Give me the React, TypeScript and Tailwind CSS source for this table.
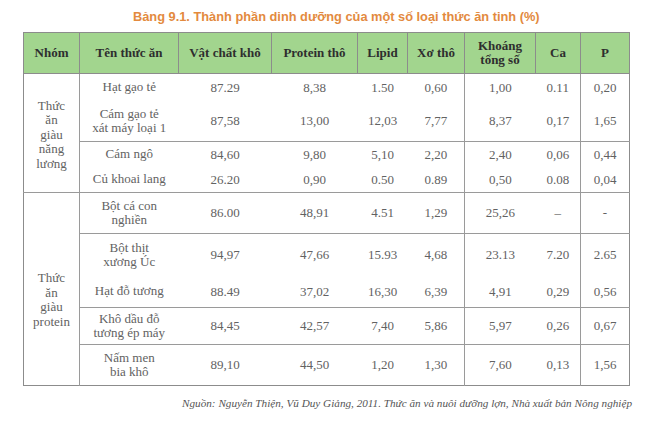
import React from "react";

type Row = {
  name: string[];
  vals: string[];
  h: string;
  top?: boolean;
};

const energyRows: Row[] = [
  { name: ["Hạt gạo tẻ"], vals: ["87.29", "8,38", "1.50", "0,60", "1,00", "0.11", "0,20"], h: "h-[27px]" },
  { name: ["Cám gạo tẻ", "xát máy loại 1"], vals: ["87,58", "13,00", "12,03", "7,77", "8,37", "0,17", "1,65"], h: "h-[41px]" },
  { name: ["Cám ngô"], vals: ["84,60", "9,80", "5,10", "2,20", "2,40", "0,06", "0,44"], h: "h-[25px]", top: true },
  { name: ["Củ khoai lang"], vals: ["26.20", "0,90", "0.50", "0.89", "0,50", "0.08", "0,04"], h: "h-[26px]" },
];

const proteinRows: Row[] = [
  { name: ["Bột cá con", "nghiền"], vals: ["86.00", "48,91", "4.51", "1,29", "25,26", "–", "-"], h: "h-[41px]", top: true },
  { name: ["Bột thịt", "xương Úc"], vals: ["94,97", "47,66", "15.93", "4,68", "23.13", "7.20", "2.65"], h: "h-[42px]", top: true },
  { name: ["Hạt đỗ tương"], vals: ["88.49", "37,02", "16,30", "6,39", "4,91", "0,29", "0,56"], h: "h-[32px]" },
  { name: ["Khô dầu đỗ", "tương ép máy"], vals: ["84,45", "42,57", "7,40", "5,86", "5,97", "0,26", "0,67"], h: "h-[37px]", top: true },
  { name: ["Nấm men", "bia khô"], vals: ["89,10", "44,50", "1,20", "1,30", "7,60", "0,13", "1,56"], h: "h-[41px]", top: true },
];

const headers = [
  ["Nhóm"],
  ["Tên thức ăn"],
  ["Vật chất khô"],
  ["Protein thô"],
  ["Lipid"],
  ["Xơ thô"],
  ["Khoáng", "tổng số"],
  ["Ca"],
  ["P"],
];

// columns that keep a vertical rule in the body (Khoáng, P)
const ruled = [4, 6];

function GroupRows({ rows, group, pad }: { rows: Row[]; group: string[]; pad: string }) {
  return (
    <>
      {rows.map((r, i) => (
        <tr key={i} className={`${r.h} ${r.top || i === 0 ? "border-t border-[#9a9a9a]" : ""}`}>
          {i === 0 && (
            <td rowSpan={rows.length} className="border-r border-[#9a9a9a] align-middle text-center">
              <div className={`leading-[14.5px] ${pad}`}>
                {group.map((w) => (
                  <div key={w}>{w}</div>
                ))}
              </div>
            </td>
          )}
          <td className="text-center leading-[14px] align-middle">
            {r.name.map((n) => (
              <div key={n}>{n}</div>
            ))}
          </td>
          {r.vals.map((v, j) => (
            <td
              key={j}
              className={`text-center align-middle ${ruled.includes(j) ? "border-l border-[#9a9a9a]" : ""}`}
            >
              {v}
            </td>
          ))}
        </tr>
      ))}
    </>
  );
}

export default function App() {
  return (
    <div className="w-[652px] h-[430px] bg-white overflow-hidden [font-family:Liberation_Serif,serif]">
      <div className="h-[32px] pt-[7px] pl-[133px] text-[12.8px] font-bold text-[#e38a3e] [font-family:Liberation_Sans,sans-serif]">
        Bảng 9.1. Thành phần dinh dưỡng của một số loại thức ăn tinh (%)
      </div>

      <div className="pl-[23px]">
        <table className="table-fixed border-collapse w-[606px] border border-[#8c8c8c] text-[13px] text-[#626262] [font-family:Liberation_Serif,serif]">
          <colgroup>
            <col className="w-[56px]" />
            <col className="w-[99px]" />
            <col className="w-[93px]" />
            <col className="w-[86px]" />
            <col className="w-[50px]" />
            <col className="w-[57px]" />
            <col className="w-[71px]" />
            <col className="w-[45px]" />
            <col className="w-[49px]" />
          </colgroup>
          <thead>
            <tr className="h-[41px] bg-[#a2d58e]">
              {headers.map((h, i) => (
                <th
                  key={i}
                  className="border border-[#8c8c8c] text-center align-middle font-bold text-[#2e2e2e] leading-[14px] p-0"
                >
                  {h.map((t) => (
                    <div key={t}>{t}</div>
                  ))}
                </th>
              ))}
            </tr>
          </thead>
          <tbody>
            <GroupRows rows={energyRows} group={["Thức", "ăn", "giàu", "năng", "lương"]} pad="pt-[4px]" />
            <GroupRows rows={proteinRows} group={["Thức", "ăn", "giàu", "protein"]} pad="pt-[22px]" />
          </tbody>
        </table>
      </div>

      <div className="pr-[20px] pt-[9px] text-right italic text-[11.2px] text-[#555] [font-family:Liberation_Serif,serif]">
        Nguồn: Nguyễn Thiện, Vũ Duy Giảng, 2011. Thức ăn và nuôi dưỡng lợn, Nhà xuất bản Nông nghiệp
      </div>
    </div>
  );
}
